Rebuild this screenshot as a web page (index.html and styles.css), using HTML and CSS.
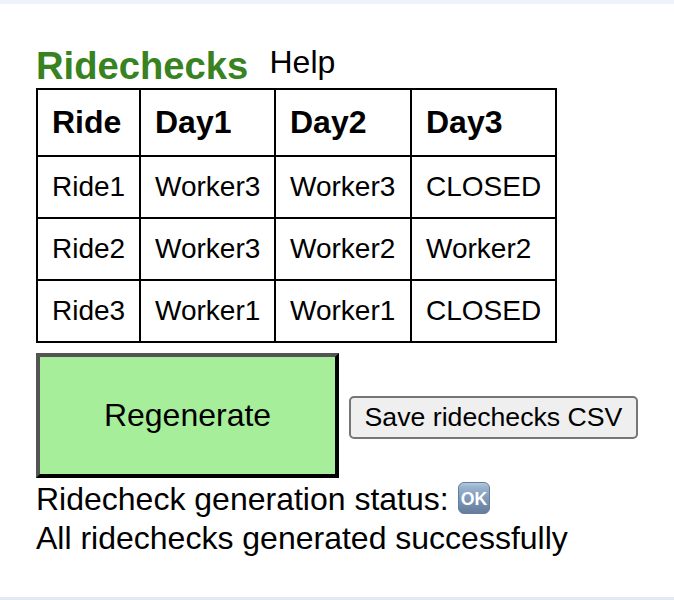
FILE: index.html
```html
<!DOCTYPE html>
<html lang="en">
<head>
<meta charset="utf-8">
<title>Ridechecks</title>
<link rel="stylesheet" href="styles.css">
</head>
<body>
<main class="panel">
  <header class="heading">
    <h1 class="title">Ridechecks</h1>
    <span class="help">Help</span>
  </header>
  <table class="rides">
    <colgroup><col class="col-ride"><col class="col-day1"><col class="col-day2"><col class="col-day3"></colgroup>
    <thead>
      <tr><th>Ride</th><th>Day1</th><th>Day2</th><th>Day3</th></tr>
    </thead>
    <tbody>
      <tr><td>Ride1</td><td>Worker3</td><td>Worker3</td><td>CLOSED</td></tr>
      <tr><td>Ride2</td><td>Worker3</td><td>Worker2</td><td>Worker2</td></tr>
      <tr><td>Ride3</td><td>Worker1</td><td>Worker1</td><td>CLOSED</td></tr>
    </tbody>
  </table>
  <div class="actions">
    <button class="regenerate" type="button">Regenerate</button>
    <button class="save" type="button">Save ridechecks CSV</button>
  </div>
  <p class="status">Ridecheck generation status:
    <svg class="ok" viewBox="0 0 32 32" role="img" aria-label="OK">
      <defs>
        <linearGradient id="face" x1="0" y1="0" x2="0" y2="1">
          <stop offset="0" stop-color="#b4cbe2"/>
          <stop offset=".14" stop-color="#9bb4cf"/>
          <stop offset=".5" stop-color="#7f9abb"/>
          <stop offset="1" stop-color="#647b9a"/>
        </linearGradient>
      </defs>
      <rect x=".5" y=".5" width="31" height="31" rx="5.5" fill="url(#face)" stroke="#667d9b"/>
      <text class="ok-text" x="16" y="22.6" text-anchor="middle" textLength="26.5" lengthAdjust="spacingAndGlyphs">OK</text>
    </svg>
  </p>
  <p class="status">All ridechecks generated successfully</p>
</main>
</body>
</html>
```
FILE: styles.css
```css
* {
  box-sizing: border-box;
}

body {
  margin: 0;
  background: #fff;
  color: #000;
  font: 32px/37px "Liberation Sans", Arial, sans-serif;
}

.panel {
  height: 600px;
  padding: 40px 36px 0;
  border-top: 4px solid #ecf3fa;
  border-bottom: 3px solid #e4eaf1;
}

.heading {
  display: flex;
  height: 44px;
  gap: 20.5px;
}

.title {
  width: 213px;
  margin: 0;
  color: #38821f;
  font-size: 38.2px;
  line-height: 44px;
}

.rides {
  width: 521px;
  table-layout: fixed;
  border-collapse: collapse;
}

.col-ride {
  width: 103px;
}

.col-day1 {
  width: 135px;
}

.col-day2 {
  width: 136px;
}

.rides th,
.rides td {
  padding: 14px;
  border: 2px solid #000;
  text-align: left;
  white-space: nowrap;
}

.rides th {
  line-height: 37px;
}

.rides td {
  font-size: 28px;
  line-height: 32px;
}

.actions {
  display: flex;
  align-items: center;
  gap: 10px;
  margin: 10px 0 3px;
}

.regenerate,
.save {
  padding: 0;
  color: #000;
  font-family: inherit;
}

.regenerate {
  width: 303px;
  height: 125px;
  border: 4px outset #000;
  background: #a7ee9a;
  font-size: 32px;
}

.save {
  width: 289px;
  height: 43px;
  margin-top: 4px;
  border: 2px solid #767676;
  border-radius: 5px;
  background: #efefef;
  font-size: 26.67px;
}

.status {
  display: flex;
  gap: 9px;
  height: 39px;
  margin: 0;
  white-space: nowrap;
}

.ok {
  width: 32px;
  height: 32px;
  margin-top: 1px;
}

.ok-text {
  fill: #fff;
  font: bold 18.5px "Liberation Sans", Arial, sans-serif;
}
```
